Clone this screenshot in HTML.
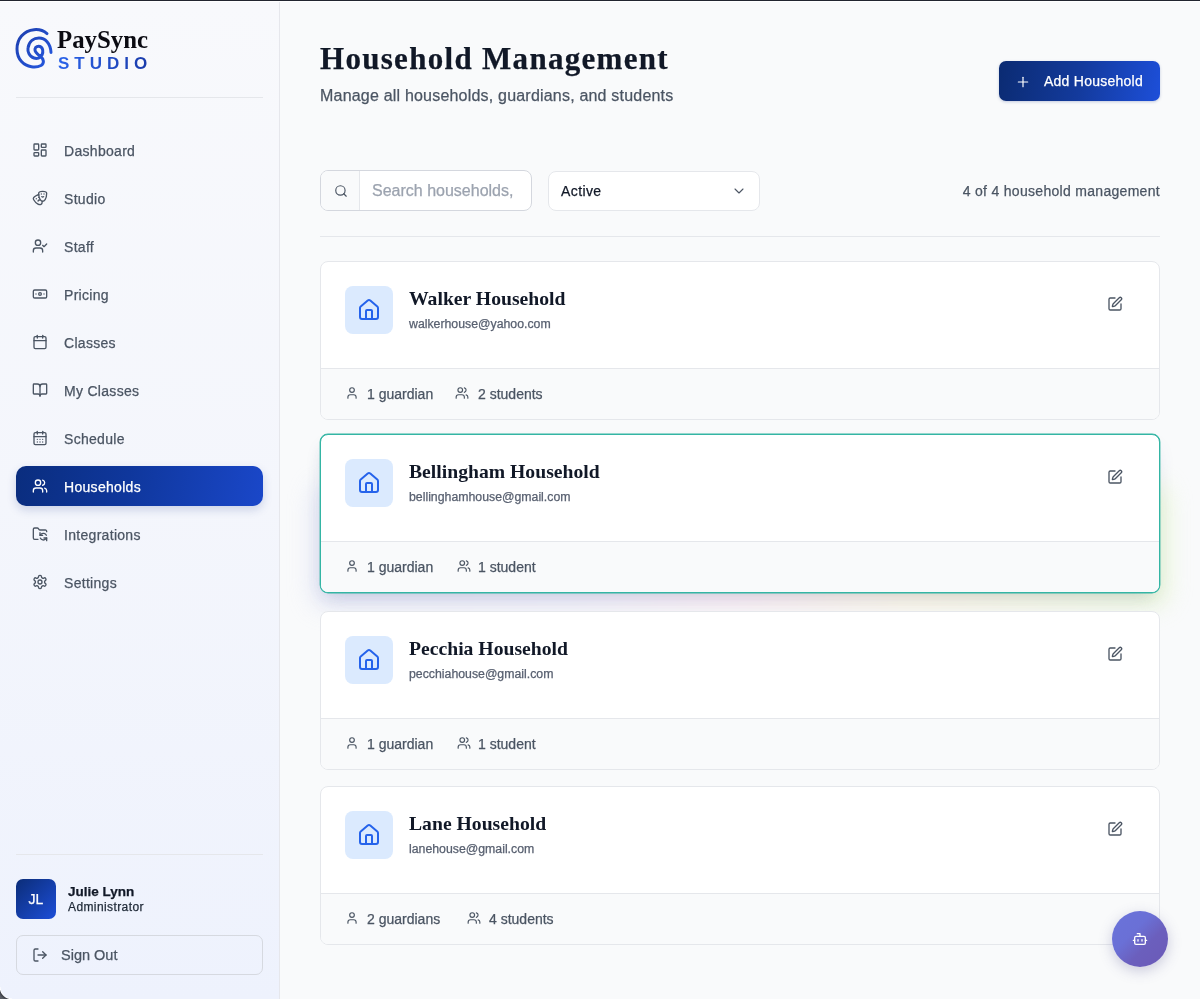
<!DOCTYPE html>
<html>
<head>
<meta charset="utf-8">
<style>
*{box-sizing:border-box;margin:0;padding:0}
html,body{width:1200px;height:999px;overflow:hidden}
body{position:relative;-webkit-font-smoothing:antialiased;-webkit-text-stroke:0.25px currentColor;background:#f9fafb;font-family:"Liberation Sans",sans-serif;color:#111827}
.abs{position:absolute}
svg.i{position:absolute;fill:none;stroke:currentColor;stroke-width:2;stroke-linecap:round;stroke-linejoin:round}
#topbar{position:absolute;left:0;top:0;width:1200px;height:1px;background:#22252f;z-index:50}
#topwhite{position:absolute;left:0;top:1px;width:1200px;height:1px;background:#fff;z-index:50}
#sidebar{position:absolute;left:0;top:0;width:280px;height:999px;background:linear-gradient(180deg,#f8f9fc 0%,#f4f6fc 50%,#eef2fd 100%);border-right:1px solid #e6e7ec}
.divider{position:absolute;left:16px;width:247px;height:1px;background:#e5e7eb}
.nav{position:absolute;left:16px;width:247px;height:40px;border-radius:10px;color:#4b5563}
.nav svg{left:16px;top:12px;width:16px;height:16px}
.nav span{position:absolute;left:48px;top:1px;line-height:40px;font-size:14px;letter-spacing:0.3px}
.nav.active{background:linear-gradient(100deg,#0a2d7e 0%,#0f379c 45%,#1a47c9 100%);color:#fff;box-shadow:0 4px 10px rgba(30,58,138,0.18)}
.card{position:absolute;left:40px;width:840px;height:159px;background:#fff;border:1px solid #e5e7eb;border-radius:8px;overflow:visible}
.card.hov{border-color:#34b5a4;box-shadow:0 0 0 0.4px #34b5a4,0 10px 20px -6px rgba(80,90,140,0.2),-5px 6px 16px -8px rgba(110,115,170,0.1)}
.card.hov::before{content:"";position:absolute;left:-8px;right:-8px;top:50px;bottom:-14px;border-radius:14px;background:linear-gradient(90deg,#d3d8f2 0%,#e0dcf4 30%,#f8dbe8 50%,#fbeec8 70%,#ddf5bd 100%);filter:blur(12px);z-index:-1;opacity:.6}
.ibox{position:absolute;left:24px;top:24px;width:48px;height:48px;border-radius:8px;background:#dbeafe;color:#2563eb}
.ctitle{position:absolute;left:88px;top:25px;-webkit-text-stroke:0;transform:scaleX(1.035);transform-origin:0 0;font-family:"Liberation Serif",serif;font-weight:bold;font-size:19px;line-height:24px;color:#111827;white-space:nowrap}
.cemail{position:absolute;left:88px;top:54px;font-size:12.3px;line-height:16px;color:#586070;white-space:nowrap}
.edit{left:786px;top:34px;width:16px;height:16px;color:#4b5563}
.cfoot{position:absolute;left:0;right:0;top:106px;bottom:0;border-top:1px solid #e5e7eb;background:#f9fafb;border-radius:0 0 7px 7px;color:#4b5563}
.cfoot span{top:0;line-height:50px;font-size:14px;white-space:nowrap}
#main{position:absolute;left:280px;top:0;width:920px;height:999px;will-change:transform}
#sidebar{will-change:transform}
</style>
</head>
<body>
<div id="topbar"></div><div id="topwhite"></div>
<div id="sidebar">
  <!-- logo -->
  <svg class="abs" style="left:12px;top:24px" width="44" height="48" viewBox="0 0 44 48" fill="none" stroke-linecap="round" stroke-linejoin="round">
    <defs><linearGradient id="lg" x1="0" y1="0" x2="1" y2="1"><stop offset="0" stop-color="#1e3fae"/><stop offset="1" stop-color="#2458e0"/></linearGradient></defs>
    <path d="M35,9.6 C28,3.5 16,4.5 9.5,12 C3.5,19 3.5,31 9.5,37.5 C15,43.5 24,44 29,41.5 C32.5,39.5 32,35 28.5,32.5 C25,30 22.5,27.5 23,25 C23.5,22.5 26,22 28,22.5 C31,23.5 31.5,28 30,31 C28.5,34 25,35 22,34 C17,32.5 15.5,27 16,24 C17,17 22,14 27,14 C33,14 38.5,19 39,28.4" stroke="url(#lg)" stroke-width="3"/>
  </svg>
  <div class="abs" style="left:57px;top:25px;font-family:'Liberation Serif',serif;font-weight:bold;font-size:26px;line-height:30px;color:#0b0b12;-webkit-text-stroke:0;transform:scaleX(0.955);transform-origin:0 0">PaySync</div>
  <div class="abs" style="left:58px;top:55px;font-size:17px;font-weight:bold;-webkit-text-stroke:0;line-height:18px;letter-spacing:5px;background:linear-gradient(90deg,#2a63ea,#1a3aa8);-webkit-background-clip:text;color:transparent">STUDIO</div>
  <div class="divider" style="top:97px"></div>

  <div class="nav" style="top:130px"><svg class="i" viewBox="0 0 24 24"><rect width="7" height="9" x="3" y="3" rx="1"/><rect width="7" height="5" x="14" y="3" rx="1"/><rect width="7" height="9" x="14" y="12" rx="1"/><rect width="7" height="5" x="3" y="16" rx="1"/></svg><span>Dashboard</span></div>
  <div class="nav" style="top:178px"><svg class="i" viewBox="0 0 24 24"><path d="M10 11h.01"/><path d="M14 6h.01"/><path d="M18 6h.01"/><path d="M6.5 13.1h.01"/><path d="M22 5c0 9-4 12-6 12s-6-3-6-12c0-2 2-3 6-3s6 1 6 3"/><path d="M17.4 9.9c-.8.8-2 .8-2.8 0"/><path d="M10.1 7.1C9 7.2 7.7 7.7 6 8.6c-3.5 2-4.7 3.9-3.7 5.6 4.5 7.8 9.5 8.4 11.2 7.4.9-.5 1.9-2.1 1.9-4.7"/><path d="M9.1 16.5c.3-1.1 1.4-1.7 2.4-1.4"/></svg><span>Studio</span></div>
  <div class="nav" style="top:226px"><svg class="i" viewBox="0 0 24 24"><path d="m16 11 2 2 4-4"/><path d="M16 21v-2a4 4 0 0 0-4-4H6a4 4 0 0 0-4 4v2"/><circle cx="9" cy="7" r="4"/></svg><span>Staff</span></div>
  <div class="nav" style="top:274px"><svg class="i" viewBox="0 0 24 24"><rect width="20" height="12" x="2" y="6" rx="2"/><circle cx="12" cy="12" r="2"/><path d="M6 12h.01M18 12h.01"/></svg><span>Pricing</span></div>
  <div class="nav" style="top:322px"><svg class="i" viewBox="0 0 24 24"><path d="M8 2v4"/><path d="M16 2v4"/><rect width="18" height="18" x="3" y="4" rx="2"/><path d="M3 10h18"/></svg><span>Classes</span></div>
  <div class="nav" style="top:370px"><svg class="i" viewBox="0 0 24 24"><path d="M12 7v14"/><path d="M3 18a1 1 0 0 1-1-1V4a1 1 0 0 1 1-1h5a4 4 0 0 1 4 4 4 4 0 0 1 4-4h5a1 1 0 0 1 1 1v13a1 1 0 0 1-1 1h-6a3 3 0 0 0-3 3 3 3 0 0 0-3-3z"/></svg><span>My Classes</span></div>
  <div class="nav" style="top:418px"><svg class="i" viewBox="0 0 24 24"><path d="M8 2v4"/><path d="M16 2v4"/><rect width="18" height="18" x="3" y="4" rx="2"/><path d="M3 10h18"/><path d="M8 14h.01"/><path d="M12 14h.01"/><path d="M16 14h.01"/><path d="M8 18h.01"/><path d="M12 18h.01"/><path d="M16 18h.01"/></svg><span>Schedule</span></div>
  <div class="nav active" style="top:466px"><svg class="i" viewBox="0 0 24 24"><path d="M16 21v-2a4 4 0 0 0-4-4H6a4 4 0 0 0-4 4v2"/><circle cx="9" cy="7" r="4"/><path d="M22 21v-2a4 4 0 0 0-3-3.87"/><path d="M16 3.13a4 4 0 0 1 0 7.75"/></svg><span>Households</span></div>
  <div class="nav" style="top:514px"><svg class="i" viewBox="0 0 24 24"><path d="M9 20H4a2 2 0 0 1-2-2V5a2 2 0 0 1 2-2h3.9a2 2 0 0 1 1.69.9l.81 1.2a2 2 0 0 0 1.67.9H20a2 2 0 0 1 2 2v.5"/><path d="M12 10v4h4"/><path d="m12 14 1.535-1.605a5 5 0 0 1 8 1.5"/><path d="M22 22v-4h-4"/><path d="m22 18-1.535 1.605a5 5 0 0 1-8-1.5"/></svg><span>Integrations</span></div>
  <div class="nav" style="top:562px"><svg class="i" viewBox="0 0 24 24"><path d="M12.22 2h-.44a2 2 0 0 0-2 2v.18a2 2 0 0 1-1 1.730l-.43.25a2 2 0 0 1-2 0l-.15-.08a2 2 0 0 0-2.73.73l-.22.38a2 2 0 0 0 .73 2.73l.15.1a2 2 0 0 1 1 1.72v.51a2 2 0 0 1-1 1.74l-.15.09a2 2 0 0 0-.73 2.73l.22.38a2 2 0 0 0 2.73.73l.15-.08a2 2 0 0 1 2 0l.43.25a2 2 0 0 1 1 1.73V20a2 2 0 0 0 2 2h.44a2 2 0 0 0 2-2v-.18a2 2 0 0 1 1-1.73l.43-.25a2 2 0 0 1 2 0l.15.08a2 2 0 0 0 2.73-.73l.22-.39a2 2 0 0 0-.73-2.73l-.15-.08a2 2 0 0 1-1-1.74v-.5a2 2 0 0 1 1-1.74l.15-.09a2 2 0 0 0 .73-2.73l-.22-.38a2 2 0 0 0-2.73-.73l-.15.08a2 2 0 0 1-2 0l-.43-.25a2 2 0 0 1-1-1.73V4a2 2 0 0 0-2-2z"/><circle cx="12" cy="12" r="3"/></svg><span>Settings</span></div>

  <div class="divider" style="top:854px"></div>
  <!-- user -->
  <div class="abs" style="left:16px;top:879px;width:40px;height:40px;border-radius:7px;background:linear-gradient(135deg,#0b2d78,#1d4ed8);color:#fff;font-size:14px;line-height:40px;text-align:center">JL</div>
  <div class="abs" style="left:68px;top:883.5px;font-size:13.5px;line-height:16px;font-weight:bold;color:#111827">Julie Lynn</div>
  <div class="abs" style="left:68px;top:899px;font-size:12px;line-height:16px;color:#1f2937;letter-spacing:0.4px">Administrator</div>
  <div class="abs" style="left:16px;top:935px;width:247px;height:40px;border:1px solid #d6d9e0;border-radius:7px;color:#4b5563">
    <svg class="i" style="left:15px;top:11px;width:16px;height:16px" viewBox="0 0 24 24"><path d="m16 17 5-5-5-5"/><path d="M21 12H9"/><path d="M9 21H5a2 2 0 0 1-2-2V5a2 2 0 0 1 2-2h4"/></svg>
    <span class="abs" style="left:44px;top:0;line-height:38px;font-size:14.5px">Sign Out</span>
  </div>
  <!-- window corner -->
  <div class="abs" style="left:0;top:987px;width:12px;height:12px;background:radial-gradient(circle at 12px 0px, rgba(0,0,0,0) 11.2px, #fff 11.8px, #3d4049 12.8px, #5a5e66 15px)"></div>
</div>

<div id="main">
  <div class="abs" style="left:40px;top:39px;font-family:'Liberation Serif',serif;font-weight:bold;font-size:31px;line-height:40px;color:#111827;white-space:nowrap;letter-spacing:1.3px" id="title">Household Management</div>
  <div class="abs" style="left:40px;top:85px;font-size:16px;line-height:22px;color:#4b5563;white-space:nowrap;letter-spacing:0.2px" id="subtitle">Manage all households, guardians, and students</div>
  <div class="abs" id="addbtn" style="left:719px;top:61px;width:161px;height:40px;border-radius:7px;background:linear-gradient(100deg,#0b2b72 0%,#133a9c 50%,#1d4fd9 100%);color:#fff;box-shadow:0 1px 3px rgba(30,58,138,0.25)">
    <svg class="i" style="left:16px;top:12.5px;width:16px;height:16px;stroke-width:1.8" viewBox="0 0 24 24"><path d="M5 12h14"/><path d="M12 5v14"/></svg>
    <span class="abs" style="left:45px;top:0;line-height:40px;font-size:14px;white-space:nowrap;letter-spacing:0.25px">Add Household</span>
  </div>

  <div class="abs" id="search" style="left:40px;top:170px;width:212px;height:41px;border:1px solid #d4d7de;border-radius:8px;background:#fff;overflow:hidden">
    <div class="abs" style="left:0;top:0;width:39px;height:39px;background:#f9fafb;border-right:1px solid #e5e7eb;color:#4b5563">
      <svg class="i" style="left:13px;top:13px;width:14px;height:14px" viewBox="0 0 24 24"><circle cx="11" cy="11" r="8"/><path d="m21 21-4.3-4.3"/></svg>
    </div>
    <span class="abs" style="left:51px;top:0;line-height:39px;font-size:16px;color:#9ca3af;white-space:nowrap">Search households,</span>
  </div>
  <div class="abs" id="select" style="left:268px;top:171px;width:212px;height:40px;border:1px solid #e5e7eb;border-radius:8px;background:#fff;color:#111827">
    <span class="abs" style="left:12px;top:0;line-height:38px;font-size:14px;letter-spacing:0.4px">Active</span>
    <svg class="i" style="left:182px;top:11px;width:16px;height:16px;color:#4b5563;stroke-width:1.6" viewBox="0 0 24 24"><path d="m6 9 6 6 6-6"/></svg>
  </div>
  <div class="abs" id="count" style="right:40px;top:181px;font-size:14px;line-height:20px;color:#4b5563;white-space:nowrap;letter-spacing:0.3px">4 of 4 household management</div>
  <div class="abs" style="left:40px;top:236px;width:840px;height:1px;background:#e5e7eb"></div>
  <div class="card" style="top:261px">
    <div class="ibox"><svg class="i" style="left:12px;top:12px;width:24px;height:24px" viewBox="0 0 24 24"><path d="M15 21v-8a1 1 0 0 0-1-1h-4a1 1 0 0 0-1 1v8"/><path d="M3 10a2 2 0 0 1 .709-1.528l7-5.999a2 2 0 0 1 2.582 0l7 5.999A2 2 0 0 1 21 10v9a2 2 0 0 1-2 2H5a2 2 0 0 1-2-2z"/></svg></div>
    <div class="ctitle">Walker Household</div>
    <div class="cemail">walkerhouse@yahoo.com</div>
    <svg class="i edit" viewBox="0 0 24 24"><path d="M12 3H5a2 2 0 0 0-2 2v14a2 2 0 0 0 2 2h14a2 2 0 0 0 2-2v-7"/><path d="M18.375 2.625a1 1 0 0 1 3 3l-9.013 9.014a2 2 0 0 1-.853.505l-2.873.84a.5.5 0 0 1-.62-.62l.84-2.873a2 2 0 0 1 .506-.852z"/></svg>
    <div class="cfoot">
      <svg class="i" style="left:24px;top:17px;width:14px;height:14px" viewBox="0 0 24 24"><path d="M19 21v-2a4 4 0 0 0-4-4H9a4 4 0 0 0-4 4v2"/><circle cx="12" cy="7" r="4"/></svg>
      <span class="abs g" style="left:46px">1 guardian</span>
      <svg class="i u" style="left:134px;top:17px;width:14px;height:14px" viewBox="0 0 24 24"><path d="M16 21v-2a4 4 0 0 0-4-4H6a4 4 0 0 0-4 4v2"/><circle cx="9" cy="7" r="4"/><path d="M22 21v-2a4 4 0 0 0-3-3.87"/><path d="M16 3.13a4 4 0 0 1 0 7.75"/></svg>
      <span class="abs s" style="left:157px">2 students</span>
    </div>
  </div>
  <div class="card hov" style="top:434px">
    <div class="ibox"><svg class="i" style="left:12px;top:12px;width:24px;height:24px" viewBox="0 0 24 24"><path d="M15 21v-8a1 1 0 0 0-1-1h-4a1 1 0 0 0-1 1v8"/><path d="M3 10a2 2 0 0 1 .709-1.528l7-5.999a2 2 0 0 1 2.582 0l7 5.999A2 2 0 0 1 21 10v9a2 2 0 0 1-2 2H5a2 2 0 0 1-2-2z"/></svg></div>
    <div class="ctitle">Bellingham Household</div>
    <div class="cemail">bellinghamhouse@gmail.com</div>
    <svg class="i edit" viewBox="0 0 24 24"><path d="M12 3H5a2 2 0 0 0-2 2v14a2 2 0 0 0 2 2h14a2 2 0 0 0 2-2v-7"/><path d="M18.375 2.625a1 1 0 0 1 3 3l-9.013 9.014a2 2 0 0 1-.853.505l-2.873.84a.5.5 0 0 1-.62-.62l.84-2.873a2 2 0 0 1 .506-.852z"/></svg>
    <div class="cfoot">
      <svg class="i" style="left:24px;top:17px;width:14px;height:14px" viewBox="0 0 24 24"><path d="M19 21v-2a4 4 0 0 0-4-4H9a4 4 0 0 0-4 4v2"/><circle cx="12" cy="7" r="4"/></svg>
      <span class="abs g" style="left:46px">1 guardian</span>
      <svg class="i u" style="left:136px;top:17px;width:14px;height:14px" viewBox="0 0 24 24"><path d="M16 21v-2a4 4 0 0 0-4-4H6a4 4 0 0 0-4 4v2"/><circle cx="9" cy="7" r="4"/><path d="M22 21v-2a4 4 0 0 0-3-3.87"/><path d="M16 3.13a4 4 0 0 1 0 7.75"/></svg>
      <span class="abs s" style="left:157px">1 student</span>
    </div>
  </div>
  <div class="card" style="top:611px">
    <div class="ibox"><svg class="i" style="left:12px;top:12px;width:24px;height:24px" viewBox="0 0 24 24"><path d="M15 21v-8a1 1 0 0 0-1-1h-4a1 1 0 0 0-1 1v8"/><path d="M3 10a2 2 0 0 1 .709-1.528l7-5.999a2 2 0 0 1 2.582 0l7 5.999A2 2 0 0 1 21 10v9a2 2 0 0 1-2 2H5a2 2 0 0 1-2-2z"/></svg></div>
    <div class="ctitle">Pecchia Household</div>
    <div class="cemail">pecchiahouse@gmail.com</div>
    <svg class="i edit" viewBox="0 0 24 24"><path d="M12 3H5a2 2 0 0 0-2 2v14a2 2 0 0 0 2 2h14a2 2 0 0 0 2-2v-7"/><path d="M18.375 2.625a1 1 0 0 1 3 3l-9.013 9.014a2 2 0 0 1-.853.505l-2.873.84a.5.5 0 0 1-.62-.62l.84-2.873a2 2 0 0 1 .506-.852z"/></svg>
    <div class="cfoot">
      <svg class="i" style="left:24px;top:17px;width:14px;height:14px" viewBox="0 0 24 24"><path d="M19 21v-2a4 4 0 0 0-4-4H9a4 4 0 0 0-4 4v2"/><circle cx="12" cy="7" r="4"/></svg>
      <span class="abs g" style="left:46px">1 guardian</span>
      <svg class="i u" style="left:136px;top:17px;width:14px;height:14px" viewBox="0 0 24 24"><path d="M16 21v-2a4 4 0 0 0-4-4H6a4 4 0 0 0-4 4v2"/><circle cx="9" cy="7" r="4"/><path d="M22 21v-2a4 4 0 0 0-3-3.87"/><path d="M16 3.13a4 4 0 0 1 0 7.75"/></svg>
      <span class="abs s" style="left:157px">1 student</span>
    </div>
  </div>
  <div class="card" style="top:786px">
    <div class="ibox"><svg class="i" style="left:12px;top:12px;width:24px;height:24px" viewBox="0 0 24 24"><path d="M15 21v-8a1 1 0 0 0-1-1h-4a1 1 0 0 0-1 1v8"/><path d="M3 10a2 2 0 0 1 .709-1.528l7-5.999a2 2 0 0 1 2.582 0l7 5.999A2 2 0 0 1 21 10v9a2 2 0 0 1-2 2H5a2 2 0 0 1-2-2z"/></svg></div>
    <div class="ctitle">Lane Household</div>
    <div class="cemail">lanehouse@gmail.com</div>
    <svg class="i edit" viewBox="0 0 24 24"><path d="M12 3H5a2 2 0 0 0-2 2v14a2 2 0 0 0 2 2h14a2 2 0 0 0 2-2v-7"/><path d="M18.375 2.625a1 1 0 0 1 3 3l-9.013 9.014a2 2 0 0 1-.853.505l-2.873.84a.5.5 0 0 1-.62-.62l.84-2.873a2 2 0 0 1 .506-.852z"/></svg>
    <div class="cfoot">
      <svg class="i" style="left:24px;top:17px;width:14px;height:14px" viewBox="0 0 24 24"><path d="M19 21v-2a4 4 0 0 0-4-4H9a4 4 0 0 0-4 4v2"/><circle cx="12" cy="7" r="4"/></svg>
      <span class="abs g" style="left:46px">2 guardians</span>
      <svg class="i u" style="left:145.5px;top:17px;width:14px;height:14px" viewBox="0 0 24 24"><path d="M16 21v-2a4 4 0 0 0-4-4H6a4 4 0 0 0-4 4v2"/><circle cx="9" cy="7" r="4"/><path d="M22 21v-2a4 4 0 0 0-3-3.87"/><path d="M16 3.13a4 4 0 0 1 0 7.75"/></svg>
      <span class="abs s" style="left:168px">4 students</span>
    </div>
  </div>
  <div class="abs" id="fab" style="left:832px;top:911px;width:56px;height:56px;border-radius:50%;background:linear-gradient(135deg,#6a73da 0%,#6a70d6 38%,#6b5fbd 62%,#6b5ab7 100%);box-shadow:0 4px 14px rgba(80,80,140,0.28);color:#fff">
    <svg class="i" style="left:20px;top:20px;width:16px;height:16px" viewBox="0 0 24 24"><path d="M12 8V4H8"/><rect width="16" height="12" x="4" y="8" rx="2"/><path d="M2 14h2"/><path d="M20 14h2"/><path d="M15 13v2"/><path d="M9 13v2"/></svg>
  </div>
</div>
</body>
</html>
